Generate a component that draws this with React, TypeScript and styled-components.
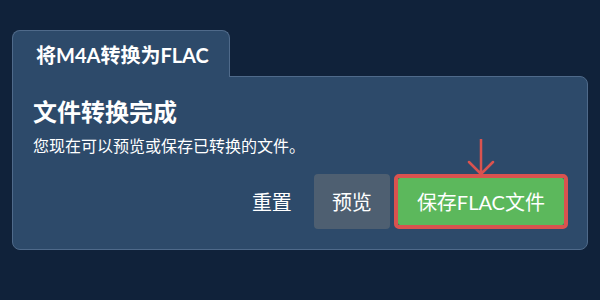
import React from "react";
import styled, { createGlobalStyle } from "styled-components";

const GlobalStyle = createGlobalStyle`
  body {
    margin: 0;
    background: #10223a;
    font-family: "Lato", "Noto Sans CJK SC", sans-serif;
    color: #ffffff;
  }
`;

function DownArrow() {
  return (
    <ArrowBox width="30" height="38" viewBox="0 0 30 38">
      <path
        d="M15 0 L15 35 M3 23 L15 35 L27 23"
        fill="none"
        stroke="#d9534f"
        strokeWidth="2.5"
        strokeLinecap="round"
        strokeLinejoin="round"
      />
    </ArrowBox>
  );
}

export default function App() {
  return (
    <>
      <GlobalStyle />
      <Page>
        <Tab>将M4A转换为FLAC</Tab>
        <Panel>
          <Title>文件转换完成</Title>
          <Subtitle>您现在可以预览或保存已转换的文件。</Subtitle>
          <Actions>
            <Button variant="plain">重置</Button>
            <Button variant="gray">预览</Button>
            <Highlight>
              <DownArrow />
              <Button variant="green">保存FLAC文件</Button>
            </Highlight>
          </Actions>
        </Panel>
      </Page>
    </>
  );
}

const Page = styled.div`
  padding: 30px 12px 0 12px;
  width: 576px;
`;

const Tab = styled.div`
  position: relative;
  z-index: 1;
  box-sizing: border-box;
  display: flex;
  align-items: center;
  width: 218px;
  height: 47px;
  margin-bottom: -1px;
  padding-left: 23px;
  background: #2d4a6a;
  border: 1px solid #4f6a8a;
  border-bottom: none;
  border-radius: 8px 8px 0 0;
  font-size: 20px;
  font-weight: 700;
`;

const Panel = styled.div`
  box-sizing: border-box;
  height: 174px;
  padding: 20px 19px 0 20px;
  background: #2d4a6a;
  border: 1px solid #4f6a8a;
  border-radius: 0 8px 8px 8px;
`;

const Title = styled.div`
  font-size: 24px;
  font-weight: 700;
  line-height: 29px;
`;

const Subtitle = styled.div`
  margin-top: 8px;
  font-size: 16px;
  line-height: 24px;
`;

const Actions = styled.div`
  display: flex;
  justify-content: flex-end;
  align-items: center;
  gap: 4px;
  margin-top: 16px;
`;

const Highlight = styled.div`
  position: relative;
  border: 4px solid #d9534f;
  border-radius: 5px;
  display: flex;
`;

const ArrowBox = styled.svg`
  position: absolute;
  left: 50%;
  bottom: 100%;
  margin-left: -15px;
  margin-bottom: 1px;
`;

const Button = styled.button<{ variant: "plain" | "gray" | "green" }>`
  height: ${(p) => (p.variant === "green" ? "47px" : "55px")};
  padding: 0 ${(p) => (p.variant === "green" ? "19px" : "18px")};
  border: none;
  border-radius: ${(p) => (p.variant === "green" ? "2px" : "4px")};
  font-family: "Lato", "Noto Sans CJK SC", sans-serif;
  font-size: 20px;
  color: #ffffff;
  background: ${(p) =>
    p.variant === "gray" ? "#4e5f71" : p.variant === "green" ? "#5cb85c" : "transparent"};
`;
